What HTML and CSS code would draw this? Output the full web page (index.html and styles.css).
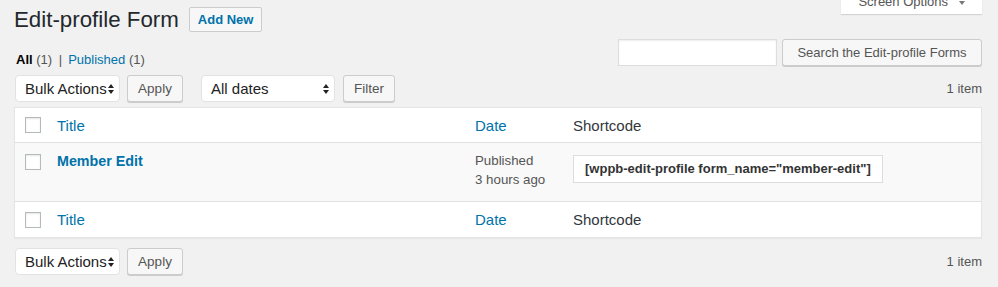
FILE: index.html
```html
<!DOCTYPE html>
<html lang="en">
<head>
    <meta charset="UTF-8">
    <meta name="viewport" content="width=device-width, initial-scale=1.0">
    <title>Edit-profile Forms</title>
    <link rel="stylesheet" href="styles.css">
</head>
<body>
    <button class="screen-options">Screen Options <span class="caret"></span></button>

    <div class="wrap">
        <div class="page-head">
            <h1>Edit-profile Form</h1>
            <a class="page-title-action" href="#">Add New</a>
        </div>

        <div class="views-row">
            <ul class="subsubsub">
                <li class="current">All <span class="count">(1)</span> <span class="sep">|</span></li>
                <li><a href="#">Published</a> <span class="count">(1)</span></li>
            </ul>
            <div class="search-box">
                <input type="search">
                <button class="button">Search the Edit-profile Forms</button>
            </div>
        </div>

        <!-- 顶部操作栏 -->
        <div class="tablenav">
            <div class="actions">
                <div class="select bulk">
                    <span>Bulk Actions</span>
                    <svg width="6" height="10" viewBox="0 0 6 10"><path d="M0 4 L3 0 L6 4 Z M0 6 L6 6 L3 10 Z" fill="#222"/></svg>
                </div>
                <button class="button">Apply</button>
                <div class="select dates">
                    <span>All dates</span>
                    <svg width="6" height="10" viewBox="0 0 6 10"><path d="M0 4 L3 0 L6 4 Z M0 6 L6 6 L3 10 Z" fill="#222"/></svg>
                </div>
                <button class="button">Filter</button>
            </div>
            <div class="num-items">1 item</div>
        </div>

        <table class="list-table">
            <colgroup>
                <col class="col-cb">
                <col class="col-title">
                <col class="col-date">
                <col>
            </colgroup>
            <thead>
                <tr>
                    <td class="cb"><span class="checkbox"></span></td>
                    <th><a href="#">Title</a></th>
                    <th><a href="#">Date</a></th>
                    <th>Shortcode</th>
                </tr>
            </thead>
            <tbody>
                <tr>
                    <td class="cb"><span class="checkbox"></span></td>
                    <td><a class="row-title" href="#">Member Edit</a></td>
                    <td class="date">Published<br>3 hours ago</td>
                    <td><span class="shortcode">[wppb-edit-profile form_name="member-edit"]</span></td>
                </tr>
            </tbody>
            <tfoot>
                <tr>
                    <td class="cb"><span class="checkbox"></span></td>
                    <th><a href="#">Title</a></th>
                    <th><a href="#">Date</a></th>
                    <th>Shortcode</th>
                </tr>
            </tfoot>
        </table>

        <!-- 底部操作栏 -->
        <div class="tablenav bottom">
            <div class="actions">
                <div class="select bulk">
                    <span>Bulk Actions</span>
                    <svg width="6" height="10" viewBox="0 0 6 10"><path d="M0 4 L3 0 L6 4 Z M0 6 L6 6 L3 10 Z" fill="#222"/></svg>
                </div>
                <button class="button">Apply</button>
            </div>
            <div class="num-items">1 item</div>
        </div>
    </div>
</body>
</html>
```

FILE: styles.css
```css
* {
    margin: 0;
    padding: 0;
    box-sizing: border-box;
}

body {
    font-family: "Liberation Sans", Arial, sans-serif;
    font-size: 13px;
    line-height: 1.4;
    color: #444;
    background: #f1f1f1;
    position: relative;
    min-height: 100vh;
}

a {
    color: #0073aa;
    text-decoration: none;
}

/* 屏幕选项标签 */
.screen-options {
    position: absolute;
    top: -13px;
    right: 16px;
    width: 141px;
    height: 27px;
    border: none;
    background: #fff;
    box-shadow: 0 1px 1px rgba(0, 0, 0, 0.12);
    font-family: inherit;
    font-size: 13px;
    color: #555;
    padding-top: 2px;
}

.caret {
    display: inline-block;
    margin-left: 7px;
    border-left: 3px solid transparent;
    border-right: 3px solid transparent;
    border-top: 4px solid #777;
    vertical-align: middle;
}

.wrap {
    padding: 0 16px 0 14px;
}

/* 标题 */
.page-head {
    display: flex;
    align-items: center;
    padding-top: 5px;
}

h1 {
    font-size: 22.3px;
    font-weight: 400;
    line-height: 29px;
    color: #23282d;
}

.page-title-action {
    margin-left: 10px;
    height: 25px;
    padding: 0 8px;
    line-height: 23px;
    font-size: 13px;
    font-weight: bold;
    background: #f7f7f7;
    border: 1px solid #ccc;
    border-radius: 2px;
}

/* 筛选链接 + 搜索 */
.views-row {
    display: flex;
    justify-content: space-between;
    align-items: flex-start;
    height: 27px;
    margin-top: 5px;
}

.subsubsub {
    list-style: none;
    display: flex;
    gap: 4px;
    margin-top: 12px;
    padding-left: 2px;
    line-height: 18px;
    font-size: 13px;
    color: #666;
}

.subsubsub .current {
    font-weight: bold;
    color: #000;
}

.subsubsub .count,
.subsubsub .sep {
    font-weight: normal;
    color: #555;
}

.subsubsub .sep {
    margin: 0 2px 0 3px;
}

.search-box {
    display: flex;
    gap: 5px;
}

.search-box input {
    width: 159px;
    height: 27px;
    border: 1px solid #ddd;
    background: #fff;
    box-shadow: inset 0 1px 2px rgba(0, 0, 0, 0.07);
}

.search-box .button {
    width: 200px;
    font-size: 13px;
}

.button {
    height: 27px;
    padding: 0 10px;
    font-family: inherit;
    font-size: 13.5px;
    color: #555;
    background: #f7f7f7;
    border: 1px solid #ccc;
    border-radius: 3px;
    box-shadow: 0 1px 0 #ccc;
    cursor: pointer;
}

/* 操作栏 */
.tablenav {
    display: flex;
    justify-content: space-between;
    align-items: center;
    height: 28px;
    margin-top: 9px;
}

.tablenav.bottom {
    margin-top: 10px;
}

.actions {
    display: flex;
    align-items: flex-start;
    height: 28px;
    padding-left: 1px;
}

.select {
    display: flex;
    justify-content: space-between;
    align-items: center;
    height: 27px;
    padding: 0 5px 0 9px;
    font-size: 15px;
    color: #222;
    background: #fff;
    border: 1px solid #e2e2e2;
    border-radius: 4px;
}

.select.bulk {
    width: 105px;
}

.select.dates {
    width: 134px;
    margin-left: 18px;
}

.actions .button {
    margin-left: 7px;
    width: 56px;
    padding: 0;
}

.actions .dates + .button {
    width: 52px;
    margin-left: 8px;
}

.num-items {
    font-size: 13px;
    color: #555;
}

/* 列表表格 */
.list-table {
    width: 100%;
    margin-top: 4px;
    table-layout: fixed;
    border-collapse: separate;
    border-spacing: 0;
    background: #fff;
    border: 1px solid #e5e5e5;
    box-shadow: 0 1px 1px rgba(0, 0, 0, 0.04);
}

.col-cb {
    width: 32px;
}

.col-title {
    width: 418px;
}

.col-date {
    width: 98px;
}

.list-table th,
.list-table td {
    text-align: left;
    font-weight: normal;
    font-size: 15px;
    color: #32373c;
    padding: 0 10px;
}

.list-table thead th,
.list-table thead td {
    height: 35px;
    vertical-align: middle;
    border-bottom: 1px solid #e1e1e1;
}

.list-table tfoot th,
.list-table tfoot td {
    height: 35px;
    vertical-align: middle;
}

.list-table tbody td {
    background: #f9f9f9;
    vertical-align: top;
    padding-top: 8px;
    padding-bottom: 12px;
    line-height: 19px;
    border-bottom: 1px solid #e1e1e1;
}

.list-table .cb {
    padding-left: 10px;
    padding-right: 0;
}

.list-table tbody .cb {
    padding-top: 11px;
}

.checkbox {
    display: block;
    width: 16px;
    height: 16px;
    background: #fff;
    border: 1px solid #b4b9be;
    box-shadow: inset 0 1px 2px rgba(0, 0, 0, 0.1);
}

.row-title {
    font-size: 14.3px;
    font-weight: bold;
}

.list-table .date {
    font-size: 13.3px;
    color: #555;
}

.shortcode {
    display: inline-block;
    margin-top: 4px;
    height: 28px;
    padding: 0 11px;
    line-height: 26px;
    font-size: 13px;
    font-weight: bold;
    color: #333;
    background: #fff;
    border: 1px solid #ddd;
    white-space: nowrap;
}
```
